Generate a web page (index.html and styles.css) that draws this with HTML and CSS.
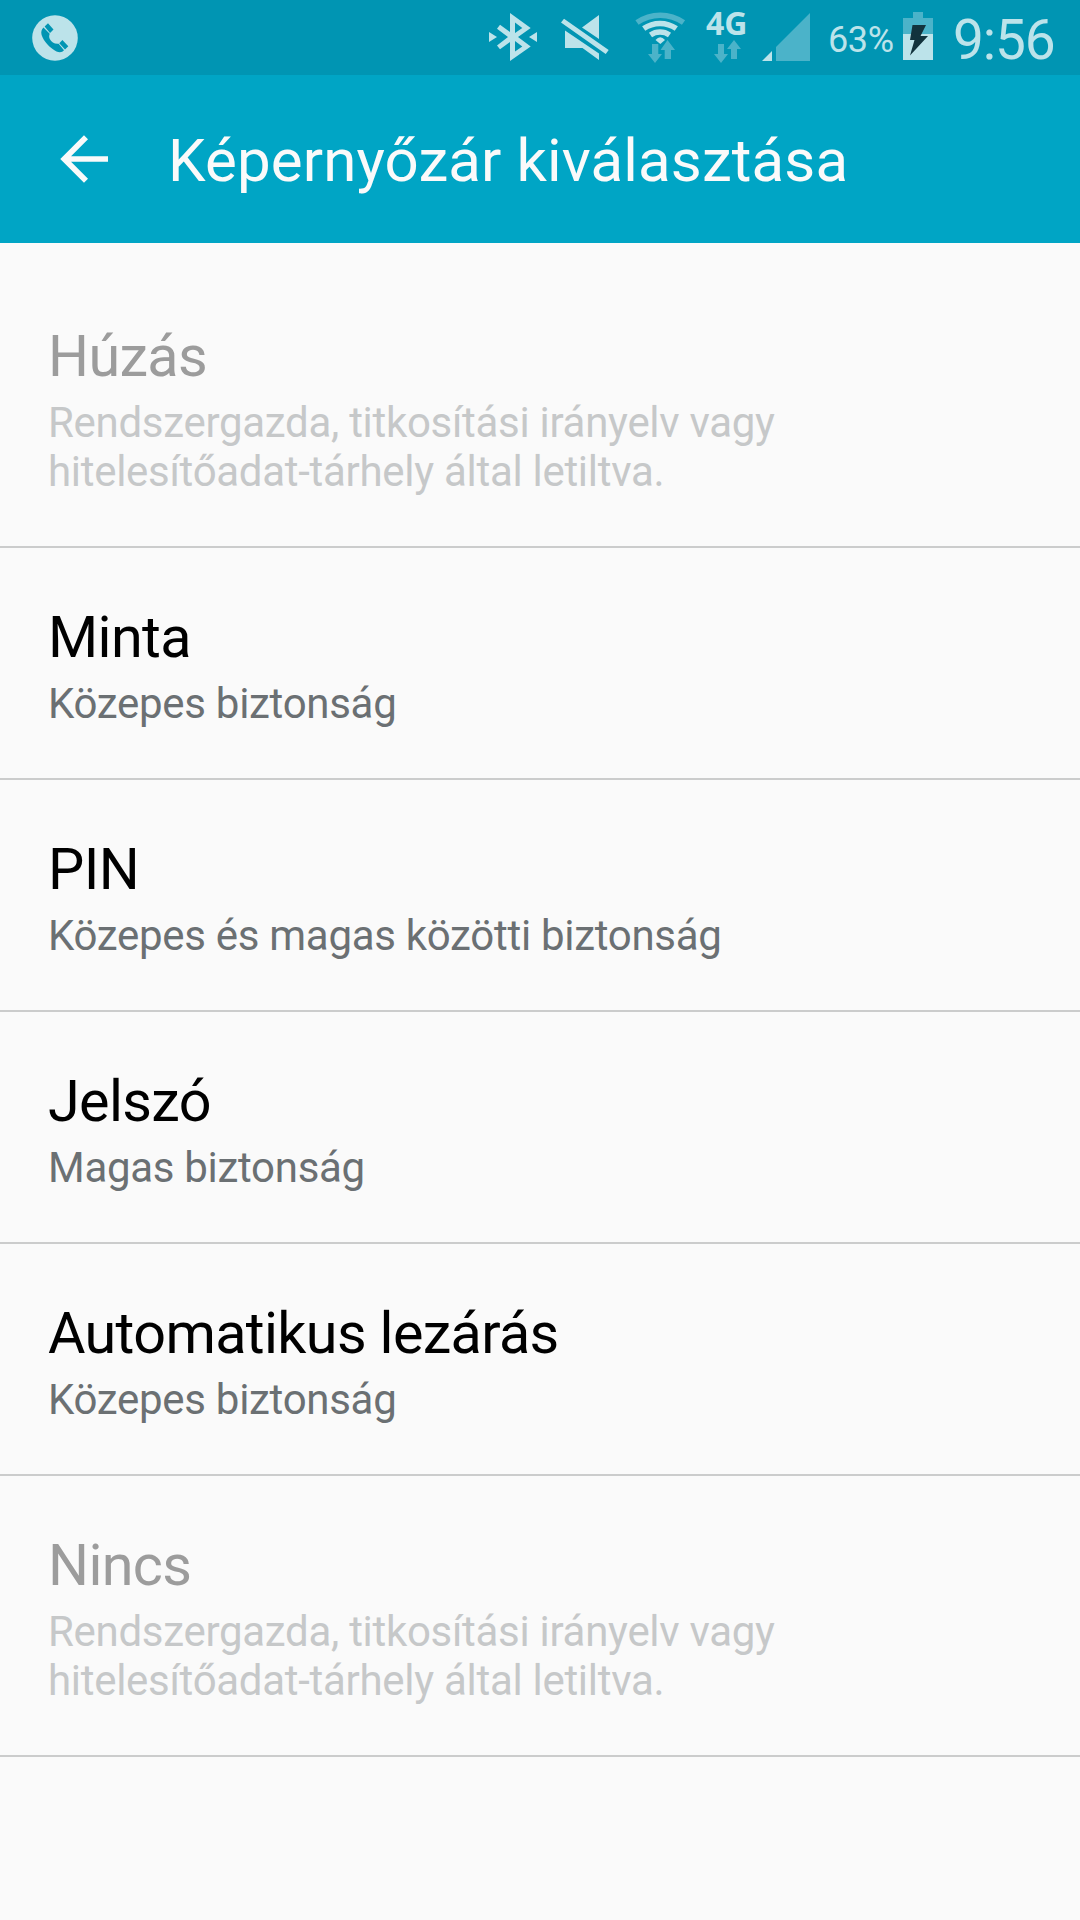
FILE: index.html
```html
<!DOCTYPE html>
<html lang="hu">
<head>
<meta charset="utf-8">
<title>Képernyőzár kiválasztása</title>
<link rel="stylesheet" href="styles.css">
</head>
<body>
<div class="status-bar">
  <svg class="icon call" width="46" height="75" viewBox="32 0 46 75">
    <circle class="lit" cx="55" cy="38" r="22.8"/>
    <path class="cut" d="M43.5 27.5L49.7 33.8C49 36 49 37.500 49.800 39C51.500 42 54.500 44.300 58.600 43.800L64 50.200C62.500 52.300 59.500 52.800 56.500 51.400C50 48.200 43.500 41 41.600 35C40.800 32 41.500 29 43.500 27.500ZM44.600 26.500L48 23.200L53.500 29.600L50 33ZM59.300 43.200L62.400 40.100L68.300 46.200L65 49.600Z"/>
  </svg>
  <div class="indicators">
    <svg class="icon bluetooth" width="50" height="75" viewBox="488 0 50 75">
      <path class="lit" fill-rule="evenodd" d="M510 13L530.7 28L518 37L530.7 46.5L510 61V42L500 49.3L497 45.5L508 37L497 28.8L500 24.8L510 32ZM515 22.5V33L522.3 28ZM515 41V51.5L522.3 46.5Z"/>
      <path class="lit" d="M489 32L497 37L489 42ZM537 32V42L529 37Z"/>
    </svg>
    <svg class="icon muted" width="50" height="75" viewBox="560 0 50 75">
      <path class="lit" d="M599 15V39L582 27.5ZM565 30.5L599 53.5V60L582.5 48H565ZM564 18.7L608.7 50L605.7 54L561 22.5Z"/>
    </svg>
    <svg class="icon wifi" width="52" height="75" viewBox="634 0 52 75">
      <path class="arc dim-line" d="M637 22.5A40.5 40.5 0 0 1 683.5 22.5"/>
      <path class="arc lit-line" d="M643.7 28.5A28.5 28.5 0 0 1 676.3 28.5"/>
      <path class="arc lit-line" d="M650.5 35A17 17 0 0 1 669.5 35"/>
      <path class="lit" d="M655.5 40Q660.3 34.5 665 40L660.3 44Z"/>
      <path class="dim" d="M652 44H658.3V54H662L655 63L648 54H652ZM664.7 59V50H660.5L667.5 40L675 50H671V59Z"/>
    </svg>
    <div class="network">
      <span class="network-type">4G</span>
      <svg class="traffic" width="28" height="24" viewBox="714 40 28 24">
        <path class="dim" d="M718 44H724V54H728L721 63L714 54H718ZM731 59V49H727L734 40L741 49H737V59Z"/>
      </svg>
    </div>
    <svg class="icon signal" width="48" height="75" viewBox="762 0 48 75">
      <path class="dim" d="M776 61V47L810 13V61Z"/>
      <path class="lit" d="M762 61L772 51V61Z"/>
    </svg>
    <span class="percent">63%</span>
    <svg class="icon battery" width="30" height="75" viewBox="903 0 30 75">
      <path class="dim" d="M903 34V18H913V12H923V18H933V34Z"/>
      <path class="lit" d="M903 34H933V60H903Z"/>
      <path class="bolt" d="M912.5 25H926L920.5 36H928L910 55.5L914.5 40H910Z"/>
    </svg>
    <span class="clock">9:56</span>
  </div>
</div>
<header class="app-bar">
  <svg class="back" width="48" height="48" viewBox="60 135 48 48">
    <path d="M108 159H64M86 137.300L64.300 159L86 180.700"/>
  </svg>
  <h1>Képernyőzár kiválasztása</h1>
</header>
<main class="options">
  <div class="option disabled">
    <h2>Húzás</h2>
    <p>Rendszergazda, titkosítási irányelv vagy<br>hitelesítőadat-tárhely által letiltva.</p>
  </div>
  <div class="option">
    <h2>Minta</h2>
    <p>Közepes biztonság</p>
  </div>
  <div class="option">
    <h2>PIN</h2>
    <p>Közepes és magas közötti biztonság</p>
  </div>
  <div class="option">
    <h2>Jelszó</h2>
    <p>Magas biztonság</p>
  </div>
  <div class="option">
    <h2>Automatikus lezárás</h2>
    <p>Közepes biztonság</p>
  </div>
  <div class="option disabled">
    <h2>Nincs</h2>
    <p>Rendszergazda, titkosítási irányelv vagy<br>hitelesítőadat-tárhely által letiltva.</p>
  </div>
</main>
</body>
</html>
```
FILE: styles.css
```css
* {
  box-sizing: border-box;
  margin: 0;
  padding: 0;
}

body {
  min-height: 1920px;
  background: #fafafa;
  color: #000;
  font-family: Roboto, sans-serif;
  white-space: nowrap;
}

svg {
  display: block;
  flex: none;
}

.status-bar {
  display: flex;
  justify-content: space-between;
  height: 75px;
  padding: 0 26px 0 32px;
  background: #0095b3;
  color: #bce3ea;
}

.indicators {
  display: flex;
}

.lit { fill: #bce3ea; }
.dim { fill: #4bb3c9; }
.cut { fill: #0095b3; }
.bolt { fill: #12333d; }

.arc {
  fill: none;
  stroke-width: 5.5;
}

.lit-line { stroke: #bce3ea; }
.dim-line { stroke: #4bb3c9; }

.muted { margin-left: 22px; }
.wifi { margin-left: 24px; }

.network {
  display: flex;
  flex-direction: column;
  width: 42px;
  margin-left: 20px;
  padding-top: 6px;
}

.network-type {
  height: 34px;
  font: 700 32px/34px "Open Sans", sans-serif;
}

.traffic { margin-left: 8px; }
.signal { margin-left: 14px; }

.percent {
  width: 67px;
  margin-left: 18px;
  padding-top: 19px;
  font-size: 36px;
  letter-spacing: -0.4px;
  line-height: 42px;
}

.battery { margin-left: 8px; }

.clock {
  width: 101px;
  margin-left: 20px;
  padding-top: 8px;
  font-size: 55px;
  letter-spacing: -1.1px;
  line-height: 64px;
}

.app-bar {
  display: flex;
  align-items: center;
  height: 168px;
  padding-left: 60px;
  background: #00a5c5;
  color: #fafafa;
}

.back {
  fill: none;
  stroke: #fafafa;
  stroke-width: 5.7;
}

.app-bar h1 {
  margin-left: 60px;
  padding-top: 4px;
  font-size: 60px;
  font-weight: 400;
  letter-spacing: 0.13px;
  line-height: 70px;
}

.options {
  padding-top: 24px;
}

.option {
  padding: 56px 48px 50px;
  border-bottom: 2px solid #cbcccc;
}

.option h2 {
  margin-bottom: 7px;
  font-size: 57.5px;
  font-weight: 400;
  letter-spacing: -0.64px;
  line-height: 68px;
}

.option p {
  color: #6b7073;
  font-size: 42px;
  letter-spacing: -0.29px;
  line-height: 49px;
}

.disabled h2 { color: #9c9c9c; }
.disabled p { color: #c6c8c9; }
```
